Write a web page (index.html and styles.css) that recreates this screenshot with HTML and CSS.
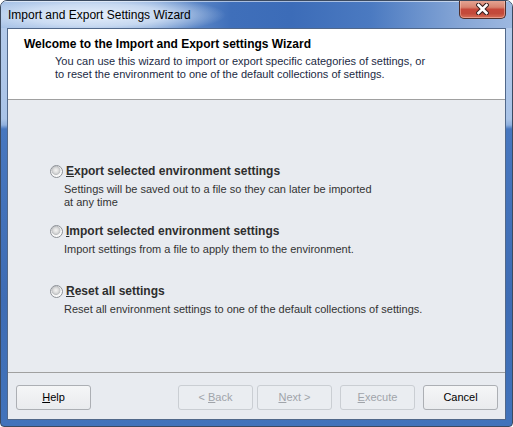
FILE: index.html
```html
<!DOCTYPE html>
<html>
<head>
<meta charset="utf-8">
<link rel="stylesheet" href="styles.css">
</head>
<body>
<div class="window">
  <div class="titlebar">
    <span class="title">Import and Export Settings Wizard</span>
    <div class="close">
      <svg width="13" height="12" viewBox="0 0 13 12">
        <path d="M2.5 2 L10.5 10 M10.5 2 L2.5 10" stroke="#3a2020" stroke-width="4.6" stroke-linecap="square" fill="none"/>
        <path d="M2.5 2 L10.5 10 M10.5 2 L2.5 10" stroke="#ffffff" stroke-width="2.6" stroke-linecap="square" fill="none"/>
      </svg>
    </div>
  </div>
  <div class="client">
    <div class="header">
      <div class="h-title">Welcome to the Import and Export settings Wizard</div>
      <div class="h-desc">You can use this wizard to import or export specific categories of settings, or<br>to reset the environment to one of the default collections of settings.</div>
    </div>
    <div class="content">
      <div class="option">
        <div class="opt-label"><span class="radio"></span><span class="opt-text"><u>E</u>xport selected environment settings</span></div>
        <div class="opt-desc">Settings will be saved out to a file so they can later be imported<br>at any time</div>
      </div>
      <div class="option">
        <div class="opt-label"><span class="radio"></span><span class="opt-text"><u>I</u>mport selected environment settings</span></div>
        <div class="opt-desc">Import settings from a file to apply them to the environment.</div>
      </div>
      <div class="option">
        <div class="opt-label"><span class="radio"></span><span class="opt-text"><u>R</u>eset all settings</span></div>
        <div class="opt-desc">Reset all environment settings to one of the default collections of settings.</div>
      </div>
    </div>
    <div class="footer">
      <div class="btn"><u>H</u>elp</div>
      <div class="btn disabled push">&lt; <u>B</u>ack</div>
      <div class="btn disabled gap-s"><u>N</u>ext &gt;</div>
      <div class="btn disabled gap-l"><u>E</u>xecute</div>
      <div class="btn gap-l">Cancel</div>
    </div>
  </div>
</div>
</body>
</html>
```

FILE: styles.css
```css
* { box-sizing: border-box; }
html, body { margin: 0; padding: 0; background: #ffffff; }

.window {
  width: 513px;
  height: 427px;
  border: 1px solid #3b4a60;
  border-radius: 7px 7px 4px 4px;
  overflow: hidden;
  display: flex;
  flex-direction: column;
  font-family: "Liberation Sans", Arial, sans-serif;
  background: linear-gradient(180deg, #b7cdec 0px, #a9c3e7 118px, #8fb0de 124px, #4777bf 128px, #3e6cb4 300px, #4173bb 100%);
}

.titlebar {
  flex: none;
  height: 27px;
  display: flex;
  align-items: center;
  padding-left: 7px;
  background:
    radial-gradient(ellipse 130px 20px at 95px 14px, rgba(235,242,252,0.95) 0%, rgba(220,232,248,0.75) 55%, rgba(200,218,242,0) 100%),
    linear-gradient(90deg, #a4c0e6 0px, #7ea3d6 150px, #3f6fba 230px, #3c6cb8 290px, #4b7ac1 370px, #6c93cd 420px, #86a6d6 460px, #9db8e0 100%);
  box-shadow: inset 0 1px 0 rgba(255,255,255,0.55);
}

.title {
  font-size: 12px;
  color: #000000;
  flex: 1;
  line-height: 14px;
  padding-top: 1px;
}

.close {
  align-self: flex-start;
  margin-top: -1px;
  margin-right: 6px;
  width: 47px;
  height: 19px;
  border: 1px solid #50302c;
  border-top: none;
  border-radius: 0 0 5px 5px;
  display: flex;
  align-items: center;
  justify-content: center;
  background: linear-gradient(180deg, #e6a897 0%, #d88370 40%, #c6483a 52%, #c24a3a 75%, #d66f58 100%);
  box-shadow: inset 0 0 0 1px rgba(255,210,200,0.45);
}

.client {
  flex: 1;
  margin: 0 6px 6px 6px;
  border: 1px solid #51688a;
  display: flex;
  flex-direction: column;
  background: #e8ebf0;
}

.header {
  flex: none;
  height: 71px;
  background: #ffffff;
  border-bottom: 1px solid #a0a0a0;
  padding: 8px 0 0 16px;
}

.h-title {
  font-size: 12px;
  font-weight: bold;
  line-height: 14px;
  color: #000000;
}

.h-desc {
  margin: 4px 0 0 31px;
  font-size: 11px;
  line-height: 13px;
  color: #1b2a44;
}

.content {
  flex: 1;
  padding: 64px 0 0 42px;
  display: flex;
  flex-direction: column;
  gap: 15px;
}

.option {
  display: flex;
  flex-direction: column;
}

.opt-label {
  display: flex;
  align-items: center;
  height: 14px;
}

.radio {
  width: 13px;
  height: 13px;
  border-radius: 50%;
  border: 1px solid #8d9197;
  background: radial-gradient(circle at 45% 40%, #f4f4f4 0px, #dcdcdc 2.5px, #bfc1c4 4.2px, #eeeeee 4.7px, #fafafa 5.5px);
  flex: none;
}

.opt-text {
  margin-left: 3px;
  font-size: 12px;
  font-weight: bold;
  line-height: 14px;
  color: #2e2e2e;
}

.opt-desc {
  margin: 5px 0 0 14px;
  min-height: 26px;
  font-size: 11px;
  line-height: 13px;
  color: #333333;
}

.footer {
  flex: none;
  height: 47px;
  border-top: 1px solid #a0a0a0;
  padding: 12px 7px 0 8px;
  display: flex;
  align-items: flex-start;
}

.btn {
  width: 75px;
  height: 25px;
  border: 1px solid #acafb4;
  border-radius: 3px;
  background: linear-gradient(180deg, #f5f6f7 0%, #eff0f2 50%, #e9ebee 100%);
  font-size: 11px;
  line-height: 23px;
  text-align: center;
  color: #000000;
}

.btn.disabled {
  border-color: #caced3;
  background: #eaedf1;
  color: #a0a4aa;
}

.push { margin-left: auto; }
.gap-s { margin-left: 4px; }
.gap-l { margin-left: 8px; }
```
